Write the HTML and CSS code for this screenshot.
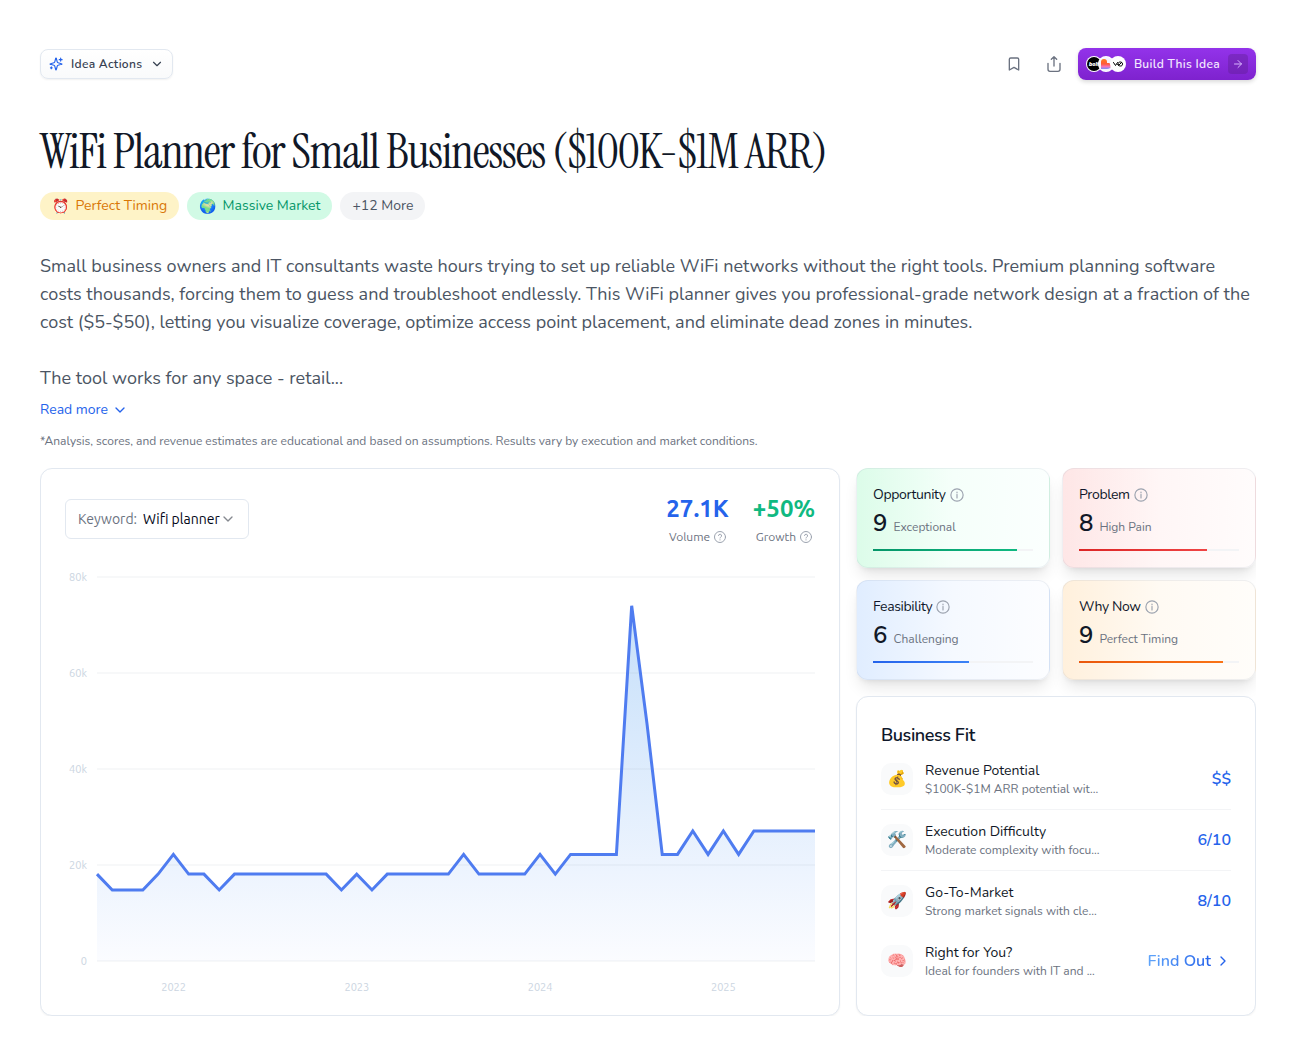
FILE: index.html
```html
<!DOCTYPE html>
<html lang="en">
<head>
  <meta charset="UTF-8">
  <meta name="viewport" content="width=device-width, initial-scale=1.0">
  <title>WiFi Planner for Small Businesses</title>
  <link rel="stylesheet" href="styles.css">
</head>
<body>
  <main class="page">
    <header class="topbar">
      <button type="button" class="actions-btn">
        <svg class="spark" width="14" height="14" viewBox="0 0 24 24"><path d="M9.9 15.5A2 2 0 0 0 8.5 14.1l-6.1-1.6a.5.5 0 0 1 0-1L8.5 9.9A2 2 0 0 0 9.9 8.5l1.6-6.1a.5.5 0 0 1 1 0l1.6 6.1a2 2 0 0 0 1.4 1.4l6.1 1.6a.5.5 0 0 1 0 1l-6.1 1.6a2 2 0 0 0-1.4 1.4l-1.6 6.1a.5.5 0 0 1-1 0z"/><path d="M20 2v5M22.5 4.500h-5M4 17v3M5.5 18.500h-3"/></svg>
        <span>Idea Actions</span>
        <svg width="14" height="14" viewBox="0 0 24 24"><path d="m6 9 6 6 6-6"/></svg>
      </button>
      <div class="topbar-right">
        <button type="button" class="icon-btn" aria-label="Save">
          <svg width="16" height="16" viewBox="0 0 24 24"><path d="m19 21-7-4-7 4V5a2 2 0 0 1 2-2h10a2 2 0 0 1 2 2z"/></svg>
        </button>
        <button type="button" class="icon-btn" aria-label="Share">
          <svg width="16" height="16" viewBox="0 0 24 24"><path d="M3 11v9a3 3 0 0 0 3 3h12a3 3 0 0 0 3-3v-9M16 5l-4-4-4 4M12 1v14"/></svg>
        </button>
        <button type="button" class="build-btn">
          <span class="logos">
            <svg class="logo" width="16" height="16" viewBox="0 0 16 16"><circle cx="8" cy="8" r="7" fill="#000"/><text x="8" y="10" class="logo-text">bolt</text></svg>
            <svg class="logo" width="16" height="16" viewBox="0 0 16 16">
              <defs>
                <linearGradient id="heart" x1="0" y1="0" x2="0" y2="1">
                  <stop offset="0" stop-color="#ff7a1a"/>
                  <stop offset="0.5" stop-color="#ff5a3c"/>
                  <stop offset="0.75" stop-color="#f472b6"/>
                  <stop offset="1" stop-color="#7b8cff"/>
                </linearGradient>
              </defs>
              <circle cx="8" cy="8" r="7" fill="#f5f3ff"/>
              <path d="M3 6a3 3 0 0 1 6 0v1h1.500a2.500 2.500 0 0 1 2.500 3c0 2-2 3-4 3H3z" fill="url(#heart)"/>
            </svg>
            <svg class="logo" width="16" height="16" viewBox="0 0 16 16"><circle cx="8" cy="8" r="7" fill="#fff"/><path d="M3.500 6.500l2 3L7.500 6.500M8 8.500C8 6.500 9 6 10.200 6S12.500 6.500 12.500 8s-.8 2-2 2-2.500-.5-2.500-1.500zM8.500 9.500l3-3" fill="none" stroke="#000" stroke-width="1"/></svg>
          </span>
          <span>Build This Idea</span>
          <span class="arrow">
            <svg width="12" height="12" viewBox="0 0 24 24"><path d="M5 12h14M12 5l7 7-7 7"/></svg>
          </span>
        </button>
      </div>
    </header>

    <h1>WiFi Planner for Small Businesses ($100K-$1M ARR)</h1>

    <div class="tags">
      <button type="button" class="tag amber"><span class="emoji">⏰</span>Perfect Timing</button>
      <button type="button" class="tag green"><span class="emoji">🌍</span>Massive Market</button>
      <button type="button" class="tag gray">+12 More</button>
    </div>

    <div class="description">
      <p>Small business owners and IT consultants waste hours trying to set up reliable WiFi networks without the right tools. Premium planning software costs thousands, forcing them to guess and troubleshoot endlessly. This WiFi planner gives you professional-grade network design at a fraction of the cost ($5-$50), letting you visualize coverage, optimize access point placement, and eliminate dead zones in minutes.</p>
      <p>The tool works for any space - retail...</p>
    </div>
    <button type="button" class="read-more">
      Read more
      <svg width="16" height="16" viewBox="0 0 24 24"><path d="m6 9 6 6 6-6"/></svg>
    </button>
    <p class="disclaimer">*Analysis, scores, and revenue estimates are educational and based on assumptions. Results vary by execution and market conditions.</p>

    <div class="dashboard">
      <section class="card chart-card">
        <div class="chart-head">
          <div class="keyword">
            <label for="keyword">Keyword:</label>
            <select id="keyword">
              <option>Wifi planner</option>
            </select>
            <svg width="16" height="16" viewBox="0 0 24 24"><path d="m6 9 6 6 6-6"/></svg>
          </div>
          <div class="stats">
            <div class="stat">
              <strong class="blue">27.1K</strong>
              <span>Volume <svg width="12" height="12" viewBox="0 0 24 24"><circle cx="12" cy="12" r="11"/><path d="M9 9a3 3 0 0 1 6 1c0 2-3 2.500-3 4M12 17.500v.5"/></svg></span>
            </div>
            <div class="stat">
              <strong class="emerald">+50%</strong>
              <span>Growth <svg width="12" height="12" viewBox="0 0 24 24"><circle cx="12" cy="12" r="11"/><path d="M9 9a3 3 0 0 1 6 1c0 2-3 2.500-3 4M12 17.500v.5"/></svg></span>
            </div>
          </div>
        </div>

        <div class="chart">
          <div class="y-axis">
            <span>80k</span>
            <span>60k</span>
            <span>40k</span>
            <span>20k</span>
            <span>0</span>
          </div>
          <!-- one unit across = one month, one unit down = 1k searches -->
          <svg class="plot" viewBox="0 0 47 80" preserveAspectRatio="none">
            <defs>
              <linearGradient id="area" x1="0" y1="0" x2="0" y2="1">
                <stop offset="0" stop-color="#c5dffa"/>
                <stop offset="0.75" stop-color="#edf4fe"/>
                <stop offset="1" stop-color="#fbfcff"/>
              </linearGradient>
            </defs>
            <path class="area" d="M0 61.9L1 65.2H3L4 61.9L5 57.8L6 61.9H7L8 65.2L9 61.9H15L16 65.2L17 61.9L18 65.2L19 61.9H23L24 57.8L25 61.9H28L29 57.8L30 61.9L31 57.8H34L35 6L36 30.5L37 57.8H38L39 52.9L40 57.8L41 52.9L42 57.8L43 52.9H47V80H0Z"/>
            <path class="grid" d="M0 0H47M0 20H47M0 40H47M0 60H47M0 80H47"/>
            <path class="line" d="M0 61.9L1 65.2H3L4 61.9L5 57.8L6 61.9H7L8 65.2L9 61.9H15L16 65.2L17 61.9L18 65.2L19 61.9H23L24 57.8L25 61.9H28L29 57.8L30 61.9L31 57.8H34L35 6L36 30.5L37 57.8H38L39 52.9L40 57.8L41 52.9L42 57.8L43 52.9H47"/>
          </svg>
          <div class="x-axis">
            <span>2022</span>
            <span>2023</span>
            <span>2024</span>
            <span>2025</span>
          </div>
        </div>
      </section>

      <div class="side">
        <div class="scores">
          <section class="score opportunity">
            <h2>Opportunity <svg width="14" height="14" viewBox="0 0 24 24"><circle cx="12" cy="12" r="10.500"/><path d="M12 17v-6M12 7v1"/></svg></h2>
            <p><b>9</b> Exceptional</p>
            <div class="bar"><div style="width: 90%"></div></div>
          </section>
          <section class="score problem">
            <h2>Problem <svg width="14" height="14" viewBox="0 0 24 24"><circle cx="12" cy="12" r="10.500"/><path d="M12 17v-6M12 7v1"/></svg></h2>
            <p><b>8</b> High Pain</p>
            <div class="bar"><div style="width: 80%"></div></div>
          </section>
          <section class="score feasibility">
            <h2>Feasibility <svg width="14" height="14" viewBox="0 0 24 24"><circle cx="12" cy="12" r="10.500"/><path d="M12 17v-6M12 7v1"/></svg></h2>
            <p><b>6</b> Challenging</p>
            <div class="bar"><div style="width: 60%"></div></div>
          </section>
          <section class="score why-now">
            <h2>Why Now <svg width="14" height="14" viewBox="0 0 24 24"><circle cx="12" cy="12" r="10.500"/><path d="M12 17v-6M12 7v1"/></svg></h2>
            <p><b>9</b> Perfect Timing</p>
            <div class="bar"><div style="width: 90%"></div></div>
          </section>
        </div>

        <section class="card fit">
          <h2>Business Fit</h2>
          <ul>
            <li>
              <span class="fit-icon">💰</span>
              <div class="fit-text"><h3>Revenue Potential</h3><p>$100K-$1M ARR potential wit...</p></div>
              <span class="fit-value">$$</span>
            </li>
            <li>
              <span class="fit-icon">🛠️</span>
              <div class="fit-text"><h3>Execution Difficulty</h3><p>Moderate complexity with focu...</p></div>
              <span class="fit-value">6/10</span>
            </li>
            <li>
              <span class="fit-icon">🚀</span>
              <div class="fit-text"><h3>Go-To-Market</h3><p>Strong market signals with cle...</p></div>
              <span class="fit-value">8/10</span>
            </li>
            <li>
              <span class="fit-icon">🧠</span>
              <div class="fit-text"><h3>Right for You?</h3><p>Ideal for founders with IT and ...</p></div>
              <a href="#" class="find-out"><span>Find Out</span><svg width="16" height="16" viewBox="0 0 24 24"><path d="m9 18 6-6-6-6"/></svg></a>
            </li>
          </ul>
        </section>
      </div>
    </div>
  </main>
</body>
</html>
```
FILE: styles.css
```css
* {
  box-sizing: border-box;
}
body {
  margin: 0;
  background: #fff;
  color: #0f172a;
  font-family: Nunito, Lato, "Noto Sans", sans-serif;
  font-size: 14px;
  line-height: 20px;
}
h1, h2, h3, p, ul {
  margin: 0;
  padding: 0;
}
button, select {
  font: inherit;
  color: inherit;
  background: none;
  border: none;
  padding: 0;
  cursor: pointer;
}
svg {
  flex-shrink: 0;
  fill: none;
  stroke: currentColor;
  stroke-width: 2;
  stroke-linecap: round;
  stroke-linejoin: round;
}
.page {
  padding: 48px 40px 40px;
}

/* top bar */
.topbar, .topbar-right {
  display: flex;
  align-items: center;
}
.topbar {
  justify-content: space-between;
}
.topbar-right {
  gap: 8px;
}
.actions-btn {
  display: flex;
  align-items: center;
  gap: 8px;
  height: 30px;
  padding: 0 8px;
  border: 1px solid #e2e8f0;
  border-radius: 8px;
  background: linear-gradient(#fff, #f9fafb);
  box-shadow: 0 1px 2px rgba(0, 0, 0, 0.06);
  color: #374151;
  font-size: 12px;
  font-weight: 600;
  letter-spacing: 0.025em;
}
.spark {
  color: #2563eb;
}
.icon-btn {
  display: flex;
  align-items: center;
  justify-content: center;
  width: 32px;
  height: 32px;
  color: #6b7280;
}
.build-btn {
  display: flex;
  align-items: center;
  gap: 8px;
  height: 32px;
  padding: 0 8px;
  border-radius: 8px;
  background: linear-gradient(#9333ea, #7e22ce);
  box-shadow: 0 2px 4px rgba(0, 0, 0, 0.15);
  color: #f3e8ff;
  font-size: 12px;
  font-weight: 600;
  letter-spacing: 0.025em;
}
.logos {
  display: flex;
}
.logo {
  border-radius: 8px;
  background: #fff;
  stroke: none;
}
.logo + .logo {
  margin-left: -4px;
}
.logo-text {
  fill: #fff;
  font: italic 900 5px Inter, sans-serif;
  text-anchor: middle;
  letter-spacing: 0;
}
.arrow {
  display: flex;
  align-items: center;
  justify-content: center;
  width: 20px;
  height: 20px;
  border-radius: 4px;
  background: rgba(88, 28, 135, 0.35);
  color: #d8b4fe;
}

/* heading */
h1 {
  margin-top: 48px;
  color: #111827;
  font-family: "Instrument Serif", "Liberation Serif", serif;
  font-size: 48px;
  font-weight: 400;
  line-height: 48px;
  letter-spacing: -0.025em;
}
.tags {
  display: flex;
  gap: 8px;
  margin-top: 16px;
}
.tag {
  display: flex;
  align-items: center;
  gap: 6px;
  height: 28px;
  padding: 0 12px;
  border-radius: 14px;
}
.emoji {
  font-family: "Noto Color Emoji", sans-serif;
}
.amber {
  background: #fef3c7;
  color: #d97706;
}
.green {
  background: #d1fae5;
  color: #059669;
}
.gray {
  background: #f3f4f6;
  color: #4b5563;
}
.description {
  margin-top: 32px;
  color: #4b5563;
  font-size: 18px;
  line-height: 28px;
}
.description p + p {
  margin-top: 28px;
}
.read-more {
  display: flex;
  align-items: center;
  gap: 4px;
  margin-top: 8px;
  color: #2563eb;
}
.disclaimer {
  margin-top: 12px;
  color: #6b7280;
  font-size: 12px;
  line-height: 18px;
}

/* dashboard */
.dashboard {
  display: grid;
  grid-template-columns: 2fr 1fr;
  gap: 16px;
  margin-top: 18px;
  overflow: hidden;
}
.card {
  padding: 24px;
  border: 1px solid #e2e8f0;
  border-radius: 12px;
  background: #fff;
  box-shadow: 0 1px 2px rgba(0, 0, 0, 0.05);
}
.chart-card {
  display: flex;
  flex-direction: column;
  padding-bottom: 20px;
  font-family: Ubuntu, "Noto Sans", sans-serif;
}
.chart-head {
  display: flex;
  align-items: center;
  justify-content: space-between;
}
.keyword {
  display: flex;
  align-items: center;
  height: 40px;
  padding: 0 12px;
  border: 1px solid #e2e8f0;
  border-radius: 6px;
  color: #6b7280;
}
.keyword select {
  appearance: none;
  margin-left: 6px;
  color: #020617;
}
.keyword svg {
  color: #85888f;
}
.stats {
  display: flex;
  gap: 24px;
}
.stat {
  display: flex;
  flex-direction: column;
  align-items: center;
  gap: 4px;
}
.stat strong {
  font-size: 24px;
  line-height: 32px;
}
.stat span {
  display: flex;
  align-items: center;
  gap: 4px;
  color: #6b7280;
  font-size: 12px;
  line-height: 16px;
}
.stat svg {
  color: #9ca3af;
}
.blue {
  color: #2563eb;
}
.emerald {
  color: #10b981;
}
.chart {
  display: grid;
  flex: 1;
  grid-template-columns: 22px 1fr;
  grid-template-rows: minmax(200px, 1fr) 16px;
  gap: 18px 10px;
  margin-top: 32px;
  color: #cbd5e1;
  font-size: 11px;
  line-height: 16px;
}
.y-axis {
  display: flex;
  flex-direction: column;
  justify-content: space-between;
  margin: -8px 0;
  text-align: right;
}
.plot {
  width: 100%;
  height: 0;
  min-height: 100%;
  overflow: visible;
  stroke-linecap: butt;
  stroke-linejoin: miter;
}
.plot path {
  vector-effect: non-scaling-stroke;
}
.area {
  fill: url(#area);
  stroke: none;
}
.grid {
  stroke: rgba(148, 163, 184, 0.08);
}
.line {
  stroke: #4f7cf0;
  stroke-width: 3;
}
.x-axis {
  display: grid;
  grid-column: 2;
  grid-template-columns: repeat(4, 1fr);
  margin-left: -15px;
  text-align: center;
}

/* score cards */
.side {
  display: flex;
  flex-direction: column;
  gap: 16px;
}
.scores {
  display: grid;
  grid-template-columns: 1fr 1fr;
  gap: 12px;
}
.score {
  padding: 16px;
  border: 1px solid rgba(148, 163, 184, 0.15);
  border-radius: 12px;
  box-shadow: 0 10px 15px -3px rgba(0, 0, 0, 0.1), 0 4px 6px -4px rgba(0, 0, 0, 0.1);
}
.score h2, .fit h2 {
  letter-spacing: -0.025em;
}
.score h2 {
  display: flex;
  align-items: center;
  gap: 4px;
  font-size: 14px;
  font-weight: 400;
}
.score h2 svg {
  color: #9ca3af;
}
.score p {
  display: flex;
  align-items: baseline;
  gap: 6px;
  height: 32px;
  margin-top: 2px;
  color: #6b7280;
  font-size: 12px;
  line-height: 32px;
}
.score b {
  color: #111827;
  font-size: 24px;
  font-weight: 600;
}
.bar {
  height: 2px;
  margin-top: 10px;
  background: #f3f4f6;
}
.bar div {
  height: 2px;
}
.opportunity {
  background: linear-gradient(90deg, #dcfce9, #f5fffa 50%, #fbfffe);
}
.opportunity .bar div {
  background: linear-gradient(90deg, #059669, #10b981);
}
.problem {
  background: linear-gradient(90deg, #fee6e6, #fff6f6 50%, #fffcfc);
}
.problem .bar div {
  background: linear-gradient(90deg, #dc2626, #ef4444);
}
.feasibility {
  background: linear-gradient(90deg, #e0edff, #f5f9ff 50%, #fcfdff);
}
.feasibility .bar div {
  background: linear-gradient(90deg, #2563eb, #3b82f6);
}
.why-now {
  background: linear-gradient(90deg, #fff0dc, #fffaf3 50%, #fffdfa);
}
.why-now .bar div {
  background: linear-gradient(90deg, #ea580c, #f97316);
}

/* business fit */
.fit {
  position: relative;
}
.fit h2 {
  font-size: 18px;
  font-weight: 600;
  line-height: 28px;
}
.fit li {
  display: flex;
  align-items: center;
  gap: 12px;
  padding: 12px 0;
  border-bottom: 1px solid #f3f4f6;
}
.fit li:nth-last-child(-n+2) {
  border-bottom: none;
}
.fit-icon {
  display: flex;
  align-items: center;
  justify-content: center;
  width: 32px;
  height: 32px;
  border-radius: 10px;
  background: #f9fafb;
  font-size: 16px;
}
.fit-text {
  flex: 1;
}
.fit-text h3 {
  color: #111827;
  font-size: 14px;
  font-weight: 400;
}
.fit-text p {
  color: #6b7280;
  font-size: 12px;
  line-height: 16px;
}
.fit-value, .find-out {
  color: #2563eb;
  font-size: 16px;
  font-weight: 600;
}
.find-out {
  display: flex;
  align-items: center;
  gap: 4px;
  text-decoration: none;
}
.find-out span {
  background: linear-gradient(90deg, #60a5fa, #2563eb);
  background-clip: text;
  color: transparent;
}
```
